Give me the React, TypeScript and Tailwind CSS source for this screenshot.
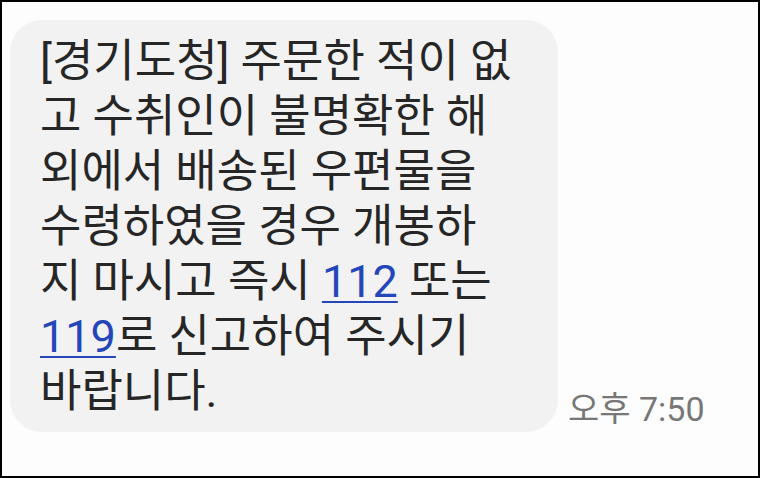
import React from 'react';

const lines: React.ReactNode[] = [
  '[경기도청] 주문한 적이 없',
  '고 수취인이 불명확한 해',
  '외에서 배송된 우편물을',
  '수령하였을 경우 개봉하',
  <>
    지 마시고 즉시 <a className="text-[#2446b9] underline decoration-2 underline-offset-[4px]">112</a> 또는
  </>,
  <>
    <a className="text-[#2446b9] underline decoration-2 underline-offset-[4px]">119</a>로 신고하여 주시기
  </>,
  '바랍니다.',
];

export default function App() {
  return (
    <div
      className="w-[760px] h-[478px] border-2 border-black bg-[#fdfdfd] overflow-hidden"
      style={{ fontFamily: 'Roboto, "Noto Sans CJK KR", sans-serif' }}
    >
      <div className="flex items-end ml-2 mt-[18px]">
        {/* Message bubble */}
        <div className="w-[548px] h-[412px] rounded-[32px] bg-[#f2f2f2] pl-[30px] pt-[14px]">
          {lines.map((line, i) => (
            <div key={i} className="text-[45px] leading-[55px] text-[#262626] whitespace-nowrap">
              {line}
            </div>
          ))}
        </div>

        {/* Timestamp */}
        <div className="ml-[10px] mb-[3px] text-[34px] leading-[40px] text-[#777777] whitespace-nowrap">
          오후 7:50
        </div>
      </div>
    </div>
  );
}
